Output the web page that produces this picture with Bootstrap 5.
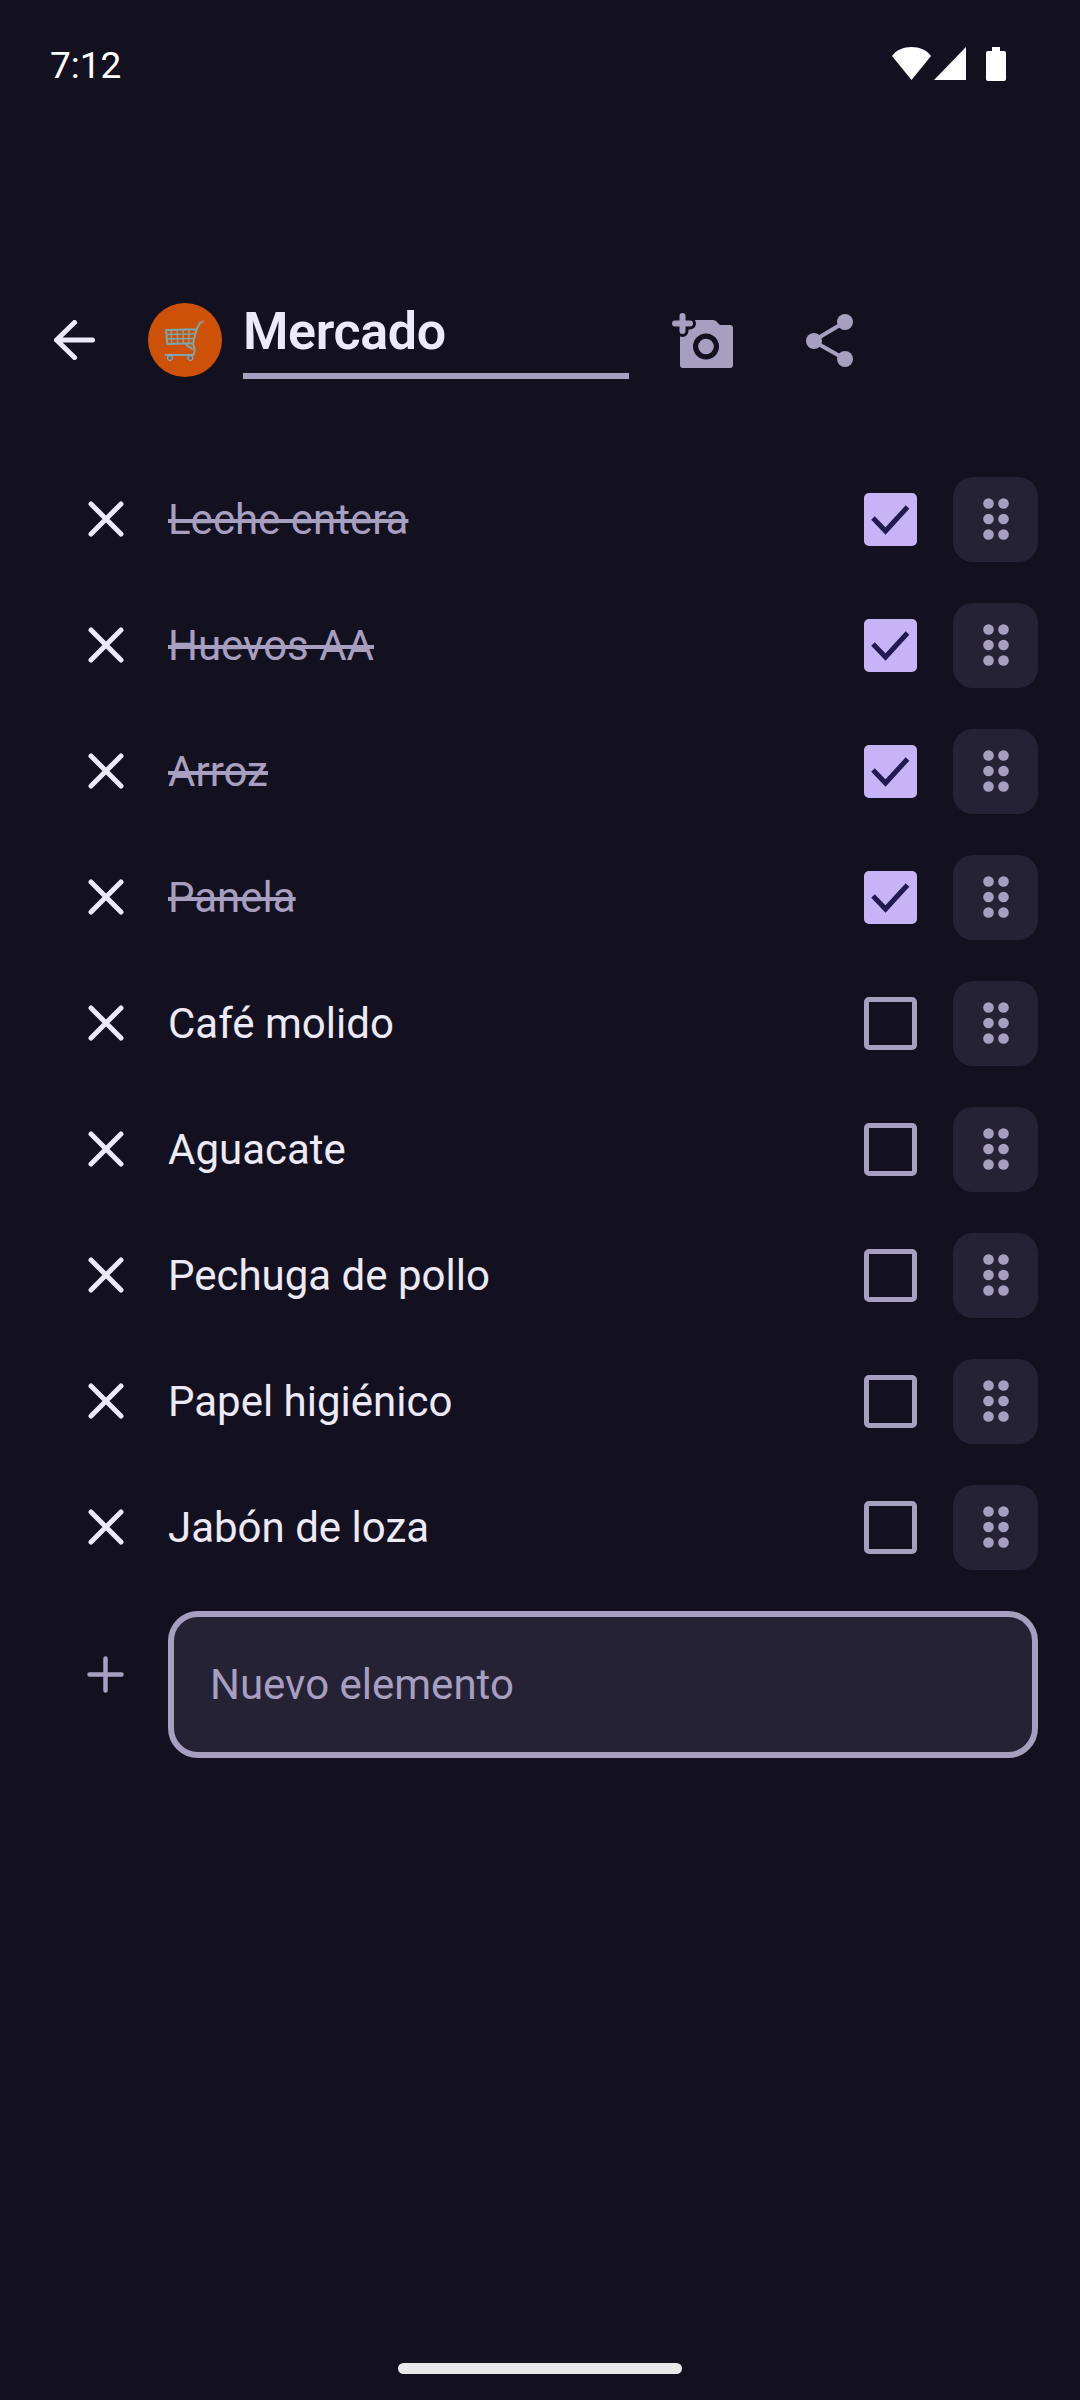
<!DOCTYPE html>
<html lang="es">
  <head>
    <meta charset="UTF-8" />
    <meta name="viewport" content="width=device-width, initial-scale=1.0" />
    <title>Mercado</title>
    <link
      href="https://cdn.jsdelivr.net/npm/bootstrap@5.3.0/dist/css/bootstrap.min.css"
      rel="stylesheet"
    />
    <style>
      body {
        background-color: #131120;
        font-family: Roboto, "Liberation Sans", sans-serif;
        color: #ece9f8;
      }
      svg {
        display: block;
        flex-shrink: 0;
      }
      .icon-btn {
        line-height: 0;
      }
      /* Status bar */
      .status-area {
        height: 127px;
        padding-left: 50px;
        padding-right: 74px;
      }
      .clock {
        font-size: 37px;
        line-height: 44px;
        padding-top: 4px;
        color: #fff;
      }
      .signal-icon {
        margin-left: 3px;
      }
      .battery-icon {
        margin-left: 20px;
      }
      /* Toolbar */
      .top-area {
        height: 126px;
        margin-top: 150px;
        padding-left: 54px;
      }
      .back-btn {
        margin-right: 53px;
      }
      .avatar-circle {
        width: 74px;
        height: 74px;
        border-radius: 50%;
        background-color: #cd5208;
        margin-right: 21px;
      }
      .title-box {
        width: 386px;
        height: 78px;
        padding-bottom: 10px;
        border-bottom: 6px solid #a79fc0;
        font-size: 52px;
        line-height: 62px;
        font-weight: 600;
        letter-spacing: -0.4px;
        color: #ece9f8;
        margin-right: 43px;
      }
      .camera-btn {
        margin-right: 73px;
      }
      /* List */
      .item-list {
        margin-top: 53px;
      }
      .item-row {
        height: 126px;
        padding-right: 42px;
      }
      .remove-col {
        width: 168px;
        padding-left: 88px;
      }
      .item-text {
        font-size: 42px;
        line-height: 50px;
        padding-top: 2px;
        color: #ece9f8;
      }
      .item-text.is-done {
        color: #a79fc0;
      }
      .item-check.form-check-input {
        width: 53px;
        height: 53px;
        margin: 0 36px 0 0;
        border: 5px solid #a79fc0;
        border-radius: 5px;
        background-color: transparent;
        flex-shrink: 0;
      }
      .item-check.form-check-input:checked {
        background-color: #c6b4f7;
        border-color: #c6b4f7;
        background-size: 53px 53px;
        background-position: -5px -5px;
        background-image: url("data:image/svg+xml,%3csvg xmlns='http://www.w3.org/2000/svg' viewBox='0 0 53 53'%3e%3cpath fill='none' stroke='%23241a52' stroke-width='5' d='M9 25l12.500 13L43.500 14'/%3e%3c/svg%3e");
      }
      .drag-handle {
        width: 85px;
        height: 85px;
        border-radius: 20px;
        background-color: #262236;
        flex-shrink: 0;
      }
      /* New element */
      .new-row {
        margin-top: 21px;
        padding-right: 42px;
      }
      .plus-col {
        width: 168px;
        padding-left: 87px;
        padding-top: 45px;
      }
      .new-input.form-control {
        height: 147px;
        padding: 0 36px;
        border: 6px solid #a79fc0;
        border-radius: 30px;
        background-color: #262236;
        font-size: 42px;
        color: #ece9f8;
        box-shadow: none;
      }
      .new-input.form-control::placeholder {
        color: #a79fc0;
        opacity: 1;
      }
      .home-bar {
        width: 284px;
        height: 11px;
        margin-bottom: 26px;
        border-radius: 6px;
        background-color: #e9e9ec;
      }
    </style>
  </head>
  <body>
    <div class="d-flex flex-column min-vh-100">
      <!-- Status bar -->
      <div class="status-area d-flex align-items-center justify-content-between">
        <div class="clock">7:12</div>
        <div class="d-flex align-items-center">
          <svg width="39" height="34" viewBox="0 0 39 34">
            <path fill="#fff" d="M0 9C8-3 31-3 39 9L19.500 33Z" />
          </svg>
          <svg class="signal-icon" width="32" height="34" viewBox="0 0 32 34">
            <path fill="#fff" d="M32 0V33H0Z" />
          </svg>
          <svg class="battery-icon" width="20" height="34" viewBox="0 0 20 34">
            <path fill="#fff" d="M6 0h8v4h4a2 2 0 0 1 2 2v26a2 2 0 0 1-2 2H2a2 2 0 0 1-2-2V6a2 2 0 0 1 2-2h4Z" />
          </svg>
        </div>
      </div>

      <!-- Toolbar -->
      <div class="top-area d-flex align-items-center">
        <button class="btn p-0 border-0 icon-btn back-btn" aria-label="Volver">
          <svg width="41" height="40" viewBox="0 0 41 40" fill="none" stroke="#ece9f8" stroke-width="5" stroke-linecap="round" stroke-linejoin="round">
            <path d="M2.500 20H38.500M20.500 2.500 2.500 20l18 17.500" />
          </svg>
        </button>
        <div class="avatar-circle d-flex align-items-center justify-content-center">
          <svg width="74" height="74" viewBox="0 0 74 74" fill="none">
            <g stroke="#7ba6ae" stroke-width="1.300">
              <path d="M23 27l.8 14M29 27l.7 14M35 26.800l.4 14M41 26.500l-.2 14M18.500 31.500l29.500-.6M19 36l28-.5" />
            </g>
            <path d="M18 27l30.700-.7L45 40.300 19.300 41ZM48.700 26.300 52 19.700l3-1M45 40.300c1 4 2 6 1.500 8-.4 2-1 3.500-1.500 3.700M38 41c1.500 3 5 3.500 6.500 5.500M17 52h28.300" stroke="#7ba6ae" stroke-width="2" stroke-linejoin="round" />
            <circle cx="55" cy="18.500" r="1.500" fill="#d9636a" />
            <circle cx="22" cy="55" r="2.500" fill="#5f6c78" stroke="#aab4bb" />
            <circle cx="42.300" cy="55" r="2.500" fill="#5f6c78" stroke="#aab4bb" />
          </svg>
        </div>
        <div class="title-box">Mercado</div>
        <button class="btn p-0 border-0 icon-btn camera-btn" aria-label="Agregar foto">
          <svg width="61" height="55" viewBox="0 0 61 55">
            <path fill="#a79fc0" d="M8 15a3 3 0 0 1 3-3l10-5h20q2 0 3.500 1.500L48 12h10a3 3 0 0 1 3 3v37a3 3 0 0 1-3 3H11a3 3 0 0 1-3-3Z" />
            <path fill="none" stroke="#131120" stroke-width="12" stroke-linecap="round" d="M10.500 3v15M3 10.500h15" />
            <path fill="none" stroke="#a79fc0" stroke-width="6" stroke-linecap="round" d="M10.500 3v15M3 10.500h15" />
            <circle cx="34" cy="33.500" r="10.400" fill="none" stroke="#131120" stroke-width="5.200" />
          </svg>
        </button>
        <button class="btn p-0 border-0 icon-btn" aria-label="Compartir">
          <svg width="47" height="53" viewBox="0 0 47 53" fill="#a79fc0">
            <path d="M39 8 7 27l32 18" fill="none" stroke="#a79fc0" stroke-width="4" />
            <circle cx="39" cy="8" r="8" />
            <circle cx="8" cy="27" r="8" />
            <circle cx="39" cy="45" r="8" />
          </svg>
        </button>
      </div>

      <!-- Items -->
      <div class="item-list" id="itemList"></div>

      <!-- New element -->
      <div class="new-row d-flex align-items-start">
        <div class="plus-col flex-shrink-0">
          <svg width="37" height="37" viewBox="0 0 37 37" fill="none" stroke="#a79fc0" stroke-width="4.500" stroke-linecap="round">
            <path d="M18.500 2.500v32M2.500 18.500h32" />
          </svg>
        </div>
        <input type="text" class="form-control new-input" placeholder="Nuevo elemento" />
      </div>

      <div class="home-bar mt-auto mx-auto"></div>
    </div>

    <script src="https://cdn.jsdelivr.net/npm/bootstrap@5.3.0/dist/js/bootstrap.bundle.min.js"></script>
    <script>
      const items = [
        { name: "Leche entera", done: true },
        { name: "Huevos AA", done: true },
        { name: "Arroz", done: true },
        { name: "Panela", done: true },
        { name: "Café molido", done: false },
        { name: "Aguacate", done: false },
        { name: "Pechuga de pollo", done: false },
        { name: "Papel higiénico", done: false },
        { name: "Jabón de loza", done: false },
      ];

      const removeIcon = `<svg width="36" height="36" viewBox="0 0 36 36" fill="none" stroke="#ece9f8" stroke-width="5" stroke-linecap="round"><path d="M3 3l30 30M33 3 3 33"/></svg>`;
      const dragIcon = `<svg width="26" height="42" viewBox="0 0 26 42" fill="#a79fc0"><circle cx="5.500" cy="5.500" r="5.300"/><circle cx="20.500" cy="5.500" r="5.300"/><circle cx="5.500" cy="21" r="5.300"/><circle cx="20.500" cy="21" r="5.300"/><circle cx="5.500" cy="36.500" r="5.300"/><circle cx="20.500" cy="36.500" r="5.300"/></svg>`;

      const list = document.getElementById("itemList");
      items.forEach((item) => {
        const row = document.createElement("div");
        row.className = "item-row d-flex align-items-center";
        row.innerHTML = `
          <div class="remove-col flex-shrink-0">${removeIcon}</div>
          <div class="item-text flex-grow-1 ${item.done ? "is-done text-decoration-line-through" : ""}"><span>${item.name}</span></div>
          <input class="form-check-input item-check" type="checkbox" ${item.done ? "checked" : ""} />
          <div class="drag-handle d-flex align-items-center justify-content-center">${dragIcon}</div>
        `;
        list.appendChild(row);
      });
    </script>
  </body>
</html>
